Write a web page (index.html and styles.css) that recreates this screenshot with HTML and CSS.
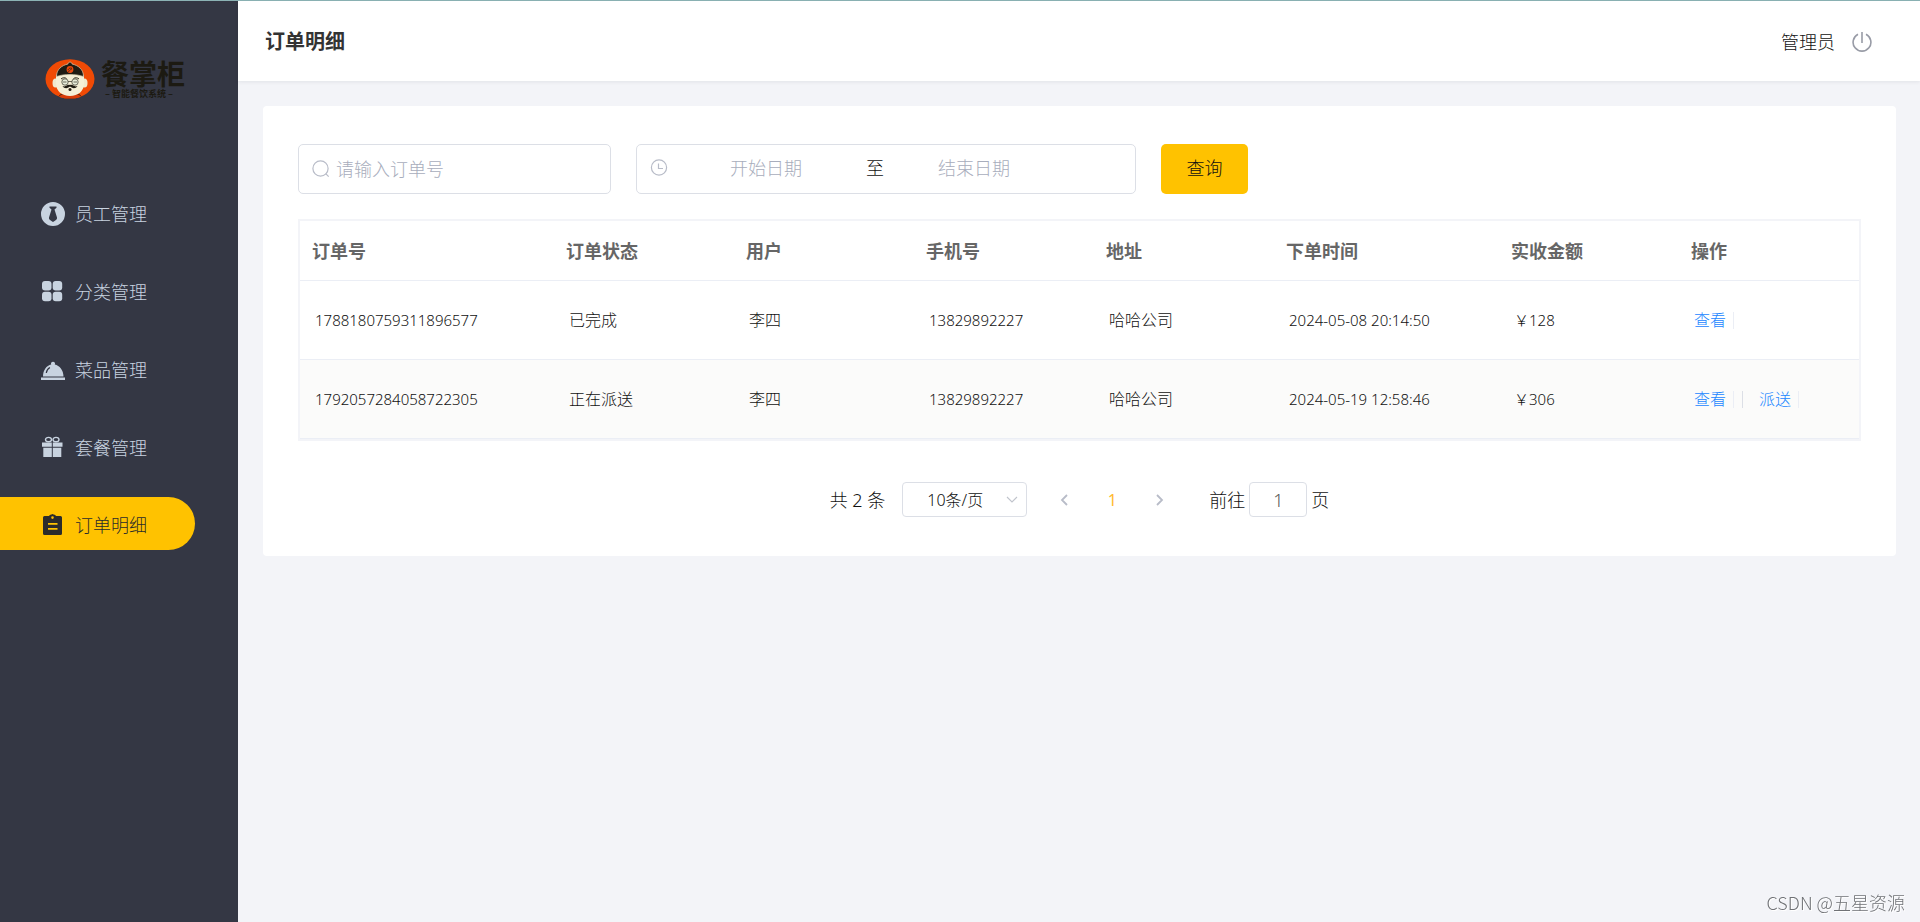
FILE: index.html
```html
<!DOCTYPE html>
<html lang="zh-CN">
<head>
<meta charset="utf-8">
<title>订单明细</title>
<link rel="stylesheet" href="styles.css">
</head>
<body>
<div class="app">
  <aside class="sidebar">
    <div class="logo">
      <svg class="logo-face" viewBox="0 0 50 40" aria-hidden="true">
        <defs><clipPath id="face-clip"><ellipse cx="25" cy="20" rx="24.5" ry="19.7"/></clipPath></defs>
        <ellipse cx="25" cy="20" rx="24.5" ry="19.7" fill="#f04a05"/>
        <g clip-path="url(#face-clip)">
          <path d="M13 40c0-4 4-6 12-6s12 2 12 6z" fill="#d93c08" stroke="#2a2015" stroke-width=".8"/>
          <ellipse cx="10.500" cy="24" rx="3" ry="4.500" fill="#efe9cf"/>
          <ellipse cx="39.500" cy="24" rx="3" ry="4.500" fill="#efe9cf"/>
          <path d="M11 17c0-5 28-5 28 0v8c0 7-6 12-14 12s-14-5-14-12z" fill="#f5efd6"/>
          <path d="M11.500 17.500c0-7 5-11 11.500-12.500C23 2.500 27 2.500 27 5c6.500 1.500 11.500 5.500 11.500 12.500-8-2.700-19-2.700-27 0z" fill="#1f1b12" stroke="#d8cdb0" stroke-width=".7"/>
          <circle cx="25" cy="10.500" r="3.400" fill="#e8480c"/>
          <path d="M23 11c1-2.500 3.500-2 4-1.500-1 .5-2 2.500-4 3" fill="none" stroke="#1f1b12" stroke-width=".7"/>
          <path d="M16 20c1.500-1.500 4-1.500 5.500-.5M28.500 19.500c1.500-1 4-1 5.500.5" fill="none" stroke="#2a2418" stroke-width="1"/>
          <circle cx="20" cy="23" r="3.200" fill="#e6ebd8" stroke="#4d4a3c" stroke-width=".8"/>
          <circle cx="30" cy="23" r="3.200" fill="#e6ebd8" stroke="#4d4a3c" stroke-width=".8"/>
          <path d="M23 22.500h4M18 23h3.500M28.500 23H32" stroke="#4d4a3c" stroke-width=".8"/>
          <path d="M25 26c3-1 4 2.500 7.500 1-2 3.500-6 2-7.500.6-1.500 1.400-5.500 2.900-7.500-.6 3.500 1.500 4.500-2 7.500-1z" fill="#1f1b12"/>
          <circle cx="25" cy="30.500" r="1.500" fill="#2a2015"/>
        </g>
      </svg>
      <div class="logo-words">
        <div class="logo-name">餐掌柜</div>
        <div class="logo-sub">– 智能餐饮系统 –</div>
      </div>
    </div>
    <nav class="menu">
      <a class="menu-item" href="#">
        <svg class="menu-icon" viewBox="0 0 24 24" aria-hidden="true"><path fill-rule="evenodd" fill="currentColor" d="M12 0a12 12 0 1 1 0 24 12 12 0 0 1 0-24zM8.500 4.500v1.200l2 1.800-2.500 8c-.4 1.800 1 2.800 4 4.500 3-1.700 4.400-2.700 4-4.500l-2.500-8 2-1.800V4.500z"/></svg>
        <span>员工管理</span>
      </a>
      <a class="menu-item" href="#">
        <svg class="menu-icon" viewBox="0 0 24 24" aria-hidden="true"><g fill="currentColor"><rect x="1" y="1" width="9.500" height="9.500" rx="3"/><rect x="11.700" y="1" width="9.500" height="9.500" rx="3"/><rect x="1" y="11.700" width="9.500" height="9.500" rx="3"/><rect x="11.700" y="11.700" width="9.500" height="9.500" rx="3"/></g></svg>
        <span>分类管理</span>
      </a>
      <a class="menu-item" href="#">
        <svg class="menu-icon" viewBox="0 0 24 24" aria-hidden="true"><path fill="currentColor" d="M2 18.500C2 12 5.500 7.700 10.200 6.500a2 2 0 1 1 3.600 0C18.500 7.700 22.500 12 22.500 18.500z"/><path d="M5.300 15c.3-2.600 1.700-4.400 3.600-5.500" fill="none" stroke="#343744" stroke-width="1.200"/><rect y="19.500" width="24" height="2.500" fill="currentColor"/></svg>
        <span>菜品管理</span>
      </a>
      <a class="menu-item" href="#">
        <svg class="menu-icon" viewBox="0 0 24 24" aria-hidden="true"><g fill="none" stroke="currentColor" stroke-width="1.400"><ellipse cx="7.500" cy="3.600" rx="3" ry="2.200"/><ellipse cx="15" cy="3.600" rx="3" ry="2.200"/></g><path fill="currentColor" d="M1 6.500h9.800v4.200H1zM11.800 6.500h9.700v4.200h-9.700zM2.300 11.700h8.500V21H2.300zM11.800 11.700h8.500V21h-8.500z"/></svg>
        <span>套餐管理</span>
      </a>
      <a class="menu-item active" href="#">
        <svg class="menu-icon" viewBox="0 0 24 24" aria-hidden="true"><path fill="currentColor" fill-rule="evenodd" d="M3.500 3H8c.5-1.500 2-1 3.500-2 1.500 1 3 .5 3.500 2h4.500A1.500 1.500 0 0 1 21 4.500v16a1.500 1.500 0 0 1-1.500 1.500h-16A1.500 1.500 0 0 1 2 20.500v-16A1.500 1.500 0 0 1 3.500 3zm8 .3a1.300 1.300 0 1 0 0 2.600 1.300 1.300 0 0 0 0-2.600zM7 10v1.800h9.500V10zm0 5v1.800h9.500V15z"/></svg>
        <span>订单明细</span>
      </a>
    </nav>
  </aside>

  <div class="main">
    <header class="topbar">
      <h1 class="page-title">订单明细</h1>
      <div class="account">
        <span>管理员</span>
        <button class="power" type="button" aria-label="退出">
          <svg viewBox="0 0 20 20" aria-hidden="true"><g fill="none" stroke="currentColor" stroke-width="1.600"><path d="M6 2.300a8.900 8.900 0 1 0 8 0"/><path d="M10 0v11"/></g></svg>
        </button>
      </div>
    </header>

    <main class="card">
      <form class="filters">
        <label class="field search">
          <svg class="field-icon" viewBox="0 0 18 18" aria-hidden="true"><g fill="none" stroke="currentColor" stroke-width="1.200"><circle cx="8.500" cy="8.500" r="7.600"/><path d="M13.700 13.700l3 3"/></g></svg>
          <input type="text" placeholder="请输入订单号" aria-label="订单号">
        </label>
        <div class="field range">
          <svg class="field-icon" viewBox="0 0 18 18" aria-hidden="true"><g fill="none" stroke="currentColor" stroke-width="1.200"><circle cx="9" cy="8.500" r="7.600"/><path d="M8.500 4.500v5H13"/></g></svg>
          <input type="text" placeholder="开始日期" aria-label="开始日期">
          <span class="range-sep">至</span>
          <input type="text" placeholder="结束日期" aria-label="结束日期">
        </div>
        <button class="query" type="button">查询</button>
      </form>

      <table class="orders">
        <colgroup><col class="c-id"><col class="c-std"><col class="c-std"><col class="c-std"><col class="c-std"><col class="c-time"><col class="c-std"><col class="c-std"></colgroup>
        <thead>
          <tr><th>订单号</th><th>订单状态</th><th>用户</th><th>手机号</th><th>地址</th><th>下单时间</th><th>实收金额</th><th>操作</th></tr>
        </thead>
        <tbody>
          <tr>
            <td class="num">1788180759311896577</td><td>已完成</td><td>李四</td><td class="num">13829892227</td><td>哈哈公司</td><td class="num">2024-05-08 20:14:50</td><td class="num">￥128</td>
            <td><div class="actions"><button class="link" type="button">查看</button></div></td>
          </tr>
          <tr>
            <td class="num">1792057284058722305</td><td>正在派送</td><td>李四</td><td class="num">13829892227</td><td>哈哈公司</td><td class="num">2024-05-19 12:58:46</td><td class="num">￥306</td>
            <td><div class="actions"><button class="link" type="button">查看</button><button class="link next" type="button">派送</button></div></td>
          </tr>
        </tbody>
      </table>

      <div class="pager">
        <span class="total">共 2 条</span>
        <div class="size">
          <select aria-label="每页条数"><option>10条/页</option></select>
          <svg class="size-arrow" viewBox="0 0 12 8" aria-hidden="true"><path d="M1 1l5 5 5-5" fill="none" stroke="currentColor" stroke-width="1.100"/></svg>
        </div>
        <div class="pages">
          <button type="button" aria-label="上一页"><svg viewBox="0 0 8 12" aria-hidden="true"><path d="M7 1L2 6l5 5" fill="none" stroke="currentColor" stroke-width="1.800"/></svg></button>
          <button class="current" type="button">1</button>
          <button type="button" aria-label="下一页"><svg viewBox="0 0 8 12" aria-hidden="true"><path d="M1 1l5 5-5 5" fill="none" stroke="currentColor" stroke-width="1.800"/></svg></button>
        </div>
        <label class="jump">前往<input type="text" value="1">页</label>
      </div>
    </main>
  </div>
</div>
<div class="watermark">CSDN @五星资源</div>
</body>
</html>
```

FILE: styles.css
```css
* {
  box-sizing: border-box;
}

body {
  margin: 0;
  background: #f3f4f8;
  color: #111;
  font: 300 16px/24px "Noto Sans", "Noto Sans CJK SC", sans-serif;
}

button,
input,
select {
  margin: 0;
  padding: 0;
  border: 0;
  background: none;
  color: inherit;
  font: inherit;
}

button {
  cursor: pointer;
}

.app {
  display: flex;
  min-height: 100vh;
  border-top: 1px solid #8cb3b5;
}

.sidebar {
  flex: 0 0 238px;
  background: #343744;
}

.logo {
  display: flex;
  gap: 6px;
  height: 184px;
  padding: 58px 0 0 45px;
}

.logo-face {
  width: 50px;
  height: 40px;
}

.logo-words {
  color: #1c1a12;
  font-family: "Noto Sans CJK SC", sans-serif;
  font-weight: 700;
}

.logo-name {
  font-size: 28px;
  line-height: 28px;
}

.logo-sub {
  padding: 2px 0 0 4px;
  font-size: 9px;
  line-height: 9px;
}

.menu {
  display: flex;
  flex-direction: column;
  gap: 25px;
}

.menu-item {
  display: flex;
  align-items: center;
  gap: 10px;
  height: 53px;
  margin-right: 43px;
  padding: 4px 0 0 41px;
  border-radius: 0 27px 27px 0;
  color: #c8d3e0;
  font-size: 18px;
  text-decoration: none;
}

.menu-item.active {
  padding-top: 2px;
  background: #ffc200;
  color: #2b2b2b;
}

.menu-icon {
  width: 24px;
  height: 24px;
}

.main {
  flex: 1;
  min-width: 0;
}

.topbar {
  display: flex;
  align-items: center;
  justify-content: space-between;
  height: 80px;
  padding: 2px 48px 0 27px;
  background: #fff;
  box-shadow: 0 1px 4px rgba(0, 21, 41, 0.08);
}

.page-title {
  margin: 0;
  color: #333;
  font-size: 20px;
  font-weight: 700;
}

.account {
  display: flex;
  align-items: center;
  gap: 17px;
  font-size: 18px;
}

.power {
  display: block;
  width: 20px;
  height: 20px;
  color: #989ba6;
}

.power svg {
  display: block;
}

.card {
  margin: 25px 24px 25px 25px;
  padding: 38px 35px 39px;
  border-radius: 4px;
  background: #fff;
}

.filters {
  display: flex;
  gap: 25px;
  margin-bottom: 25px;
  font-size: 18px;
}

.field {
  display: flex;
  align-items: center;
  height: 50px;
  padding: 0 13px;
  border: 1px solid #dcdfe6;
  border-radius: 5px;
}

.field input {
  min-width: 0;
  height: 48px;
  outline: 0;
}

.field input::placeholder {
  color: #a8adbc;
  opacity: 1;
}

.field-icon {
  flex: none;
  width: 18px;
  height: 18px;
  color: #b8bcc8;
}

.search {
  flex: 0 1 313px;
  gap: 6px;
}

.search input {
  flex: 1;
}

.range {
  flex: 0 1 500px;
  padding-bottom: 2px;
}

.range .field-icon {
  margin-right: 8px;
}

.range input {
  flex: 0 0 180px;
  text-align: center;
}

.range-sep {
  flex: 0 0 28px;
  text-align: right;
}

.query {
  width: 87px;
  height: 50px;
  padding-bottom: 3px;
  border-radius: 5px;
  background: #ffc200;
}

.orders {
  width: 100%;
  border: 2px solid #f3f4f8;
  border-spacing: 0;
  table-layout: fixed;
}

.c-id {
  width: 254px;
}

.c-std {
  width: 180px;
}

.c-time {
  width: 225px;
}

.orders th,
.orders td {
  border-bottom: 1px solid #ebeef5;
  text-align: left;
}

.orders th {
  height: 60px;
  padding: 0 12px;
  color: #666;
  font-size: 18px;
  font-weight: 700;
}

.orders td {
  height: 79px;
  padding: 0 15px;
}

.orders .num {
  font-size: 15px;
}

.orders tbody tr:nth-child(even) {
  background: #fbfbfa;
}

.actions {
  display: flex;
  gap: 8px;
}

.link {
  padding-right: 7px;
  border-right: 1px solid #ebeef5;
  color: #1a86ff;
  line-height: 17px;
}

.link.next {
  padding-left: 16px;
  border-left: 1px solid #dcdfe6;
}

.pager {
  display: flex;
  align-items: center;
  justify-content: center;
  margin-top: 41px;
  font-size: 18px;
}

.total {
  margin-right: 17px;
}

.size {
  position: relative;
  margin-right: 13px;
}

.size select {
  display: block;
  width: 125px;
  height: 35px;
  padding-left: 24px;
  border: 1px solid #dcdfe6;
  border-radius: 4px;
  font-size: 16px;
  appearance: none;
}

.size-arrow {
  position: absolute;
  top: 14px;
  right: 9px;
  width: 12px;
  height: 8px;
  color: #c0c4cc;
  pointer-events: none;
}

.pages {
  display: flex;
  margin-right: 25px;
}

.pages button {
  display: flex;
  align-items: center;
  justify-content: center;
  width: 48px;
  height: 35px;
  color: #b8bcc8;
}

.pages svg {
  width: 8px;
  height: 12px;
}

.pages .current {
  color: #ffba30;
  font-size: 16px;
  font-weight: 400;
}

.jump {
  display: flex;
  align-items: center;
  gap: 4px;
}

.jump input {
  width: 58px;
  height: 35px;
  border: 1px solid #dcdfe6;
  border-radius: 4px;
  color: #555;
  text-align: center;
}

.watermark {
  position: fixed;
  right: 15px;
  bottom: 8px;
  color: #707276;
  font-family: "Noto Sans CJK SC", sans-serif;
  font-size: 18px;
  text-shadow: 1px 1px 0 #fff;
}
```
